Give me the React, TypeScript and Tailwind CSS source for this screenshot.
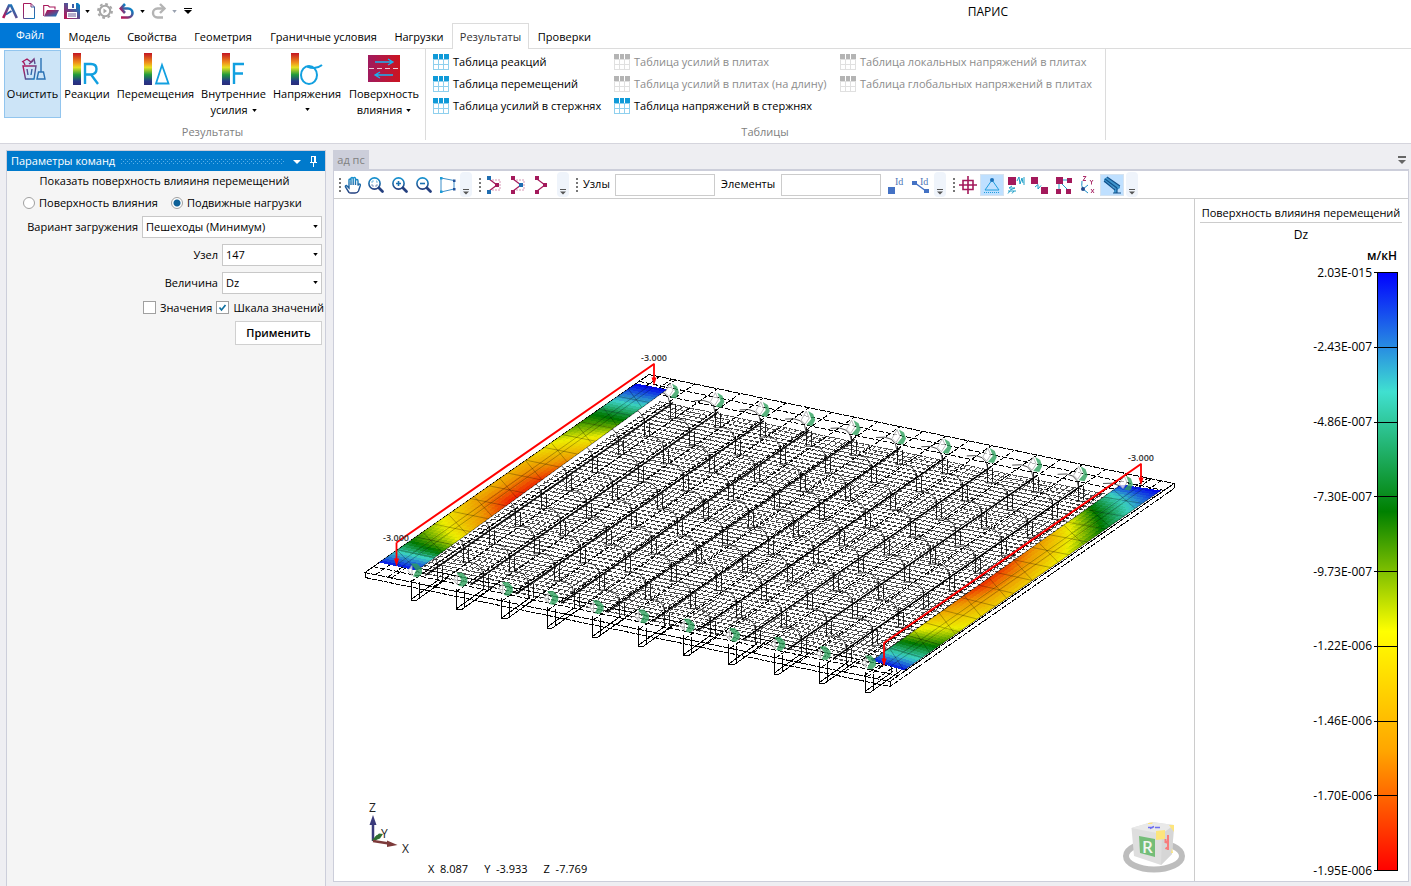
import React from "react";

type Pt = [number, number];

const FONT = "font-['Open_Sans','Noto_Sans',sans-serif]";

/* ---------- colour scale ---------- */

const STOPS: [number, number, number][] = [
  [0, 0, 255],
  [64, 224, 208],
  [0, 128, 0],
  [255, 255, 0],
  [255, 165, 0],
  [255, 0, 0],
];

function scaleColor(value: number): string {
  const x = Math.min(0.9999, Math.max(0, value)) * 5;
  const i = Math.floor(x);
  const f = x - i;
  const mix = STOPS[i].map((c, k) => Math.round((c + (STOPS[i + 1][k] - c) * f) * 0.93));
  return `rgb(${mix.join(",")})`;
}

function sample(table: Pt[], s: number): number {
  for (let i = 1; i < table.length; i++) {
    if (s <= table[i][0]) {
      const [s0, v0] = table[i - 1];
      const [s1, v1] = table[i];
      return v0 + ((v1 - v0) * (s - s0)) / (s1 - s0);
    }
  }
  return table[table.length - 1][1];
}

/* ---------- bridge deck model ---------- */

const slab = (a: number, b: number): Pt => [366 + a * 525 + b * 284, 573 + a * 109 - b * 198];
const seg = (p: Pt, q: Pt) => `M${p[0].toFixed(1)} ${p[1].toFixed(1)}L${q[0].toFixed(1)} ${q[1].toFixed(1)}`;
const GIRDERS = Array.from({ length: 11 }, (_, i) => i);

function deckLines() {
  let across = "";
  for (let b = 0.045; b < 0.915; b += 0.0156) across += seg(slab(0.072, b), slab(0.935, b));
  let along = "";
  for (let a = 0.075; a < 0.935; a += 0.01079) along += seg(slab(a, 0.04), slab(a, 0.9));
  let coarse = "";
  for (let i = 0; i <= 23; i++) coarse += seg(slab(i / 23, 0), slab(i / 23, 1));
  for (const b of [0.03, 0.06, 0.93, 0.965]) coarse += seg(slab(0, b), slab(1, b));
  for (const a of [0.02, 0.05, 0.95, 0.975]) coarse += seg(slab(a, 0), slab(a, 1));
  return { across, along, coarse };
}

function girderLines() {
  let thick = "";
  let front = "";
  let posts = "";
  let arcs = "";
  for (const i of GIRDERS) {
    const x = 416 + 45.4 * i;
    const y = 571 + 9.2 * i;
    thick += `M${x + 10} ${y + 5}L${x + 258} ${y - 168}`;
    front += `M${x - 4} ${y + 9}V${y + 30}H${x + 1}L${x + 4} ${y + 28}V${y + 11}M${x + 1} ${y + 30}L${x + 32} ${y + 8}M${x - 4} ${y + 29}L${x + 24} ${y + 9}`;
    for (let j = 1; j <= 10; j++) {
      const px = x + 25.8 * j;
      const py = y - 18 * j;
      posts += `M${px - 3} ${py + 9}V${py + 28}M${px + 2} ${py + 13}V${py + 27}`;
      arcs += `M${px - 24} ${py + 1}Q${px - 4} ${py - 2} ${px - 3} ${py + 14}`;
    }
  }
  return { thick, front, posts, arcs };
}

type Strip = { corners: [Pt, Pt, Pt, Pt]; near: Pt[]; far: Pt[] };

const STRIPS: Strip[] = [
  {
    corners: [[380, 563], [418, 571], [637, 384], [668, 390]],
    near: [[0, 0.02], [0.06, 0.2], [0.12, 0.4], [0.23, 0.58], [0.35, 0.74], [0.55, 0.74], [0.67, 0.6], [0.84, 0.38], [0.91, 0.18], [1, 0]],
    far: [[0, 0.02], [0.06, 0.2], [0.09, 0.38], [0.16, 0.58], [0.25, 0.78], [0.38, 0.97], [0.5, 0.94], [0.6, 0.83], [0.73, 0.62], [0.82, 0.42], [0.91, 0.2], [1, 0]],
  },
  {
    corners: [[873, 661], [905, 671], [1122, 485], [1162, 491]],
    near: [[0, 0.02], [0.05, 0.2], [0.11, 0.4], [0.18, 0.6], [0.28, 0.78], [0.42, 0.95], [0.53, 0.92], [0.7, 0.77], [0.79, 0.6], [0.88, 0.4], [0.95, 0.2], [1, 0.02]],
    far: [[0, 0.02], [0.06, 0.2], [0.13, 0.4], [0.24, 0.6], [0.35, 0.68], [0.5, 0.68], [0.64, 0.58], [0.77, 0.4], [0.88, 0.2], [1, 0]],
  },
];

function ResultStrip({ corners, near, far }: Strip) {
  const at = (s: number, t: number): Pt => {
    const mix = (p: Pt, q: Pt, f: number): Pt => [p[0] + (q[0] - p[0]) * f, p[1] + (q[1] - p[1]) * f];
    return mix(mix(corners[0], corners[2], s), mix(corners[1], corners[3], s), t);
  };
  const ns = 90;
  const nt = 8;
  const cells: React.ReactElement[] = [];
  for (let i = 0; i < ns; i++) {
    for (let j = 0; j < nt; j++) {
      const s = (i + 0.5) / ns;
      const t = (j + 0.5) / nt;
      const v = sample(near, s) * (1 - t) + sample(far, s) * t;
      const s1 = Math.min(1, (i + 1.4) / ns);
      const t1 = Math.min(1, (j + 1.2) / nt);
      const pts = [at(i / ns, j / nt), at(s1, j / nt), at(s1, t1), at(i / ns, t1)];
      cells.push(<polygon key={`${i}-${j}`} points={pts.map((p) => p.map((n) => n.toFixed(1)).join(",")).join(" ")} fill={scaleColor(v)} />);
    }
  }
  let grid = "";
  for (let i = 1; i < 14; i++) grid += seg(at(i / 14, 0), at(i / 14, 1));
  for (let i = 0; i < 10; i++) grid += seg(at((i + 0.7) / 10, 0), at(i / 10, 1));
  for (const t of [0.42, 0.58]) grid += seg(at(0, t), at(1, t));
  return (
    <g>
      <g shapeRendering="crispEdges">{cells}</g>
      <path d={grid} stroke="#000" strokeOpacity="0.35" strokeWidth="0.8" fill="none" />
      <path d={seg(at(0, 1), at(1, 1)) + seg(at(0, 0), at(1, 0))} stroke="#000" strokeOpacity="0.6" strokeWidth="0.8" />
    </g>
  );
}

function LoadArrow({ x, y, bottom }: { x: number; y: number; bottom: number }) {
  return (
    <g>
      <path d={`M${x} ${y}V${bottom - 5}`} stroke="#f00" strokeWidth="1.8" />
      <path d={`M${x - 2.5} ${bottom - 8}H${x + 2.5}L${x} ${bottom}Z`} fill="#f00" />
    </g>
  );
}

function DeckModel() {
  const { across, along, coarse } = deckLines();
  const { thick, front, posts, arcs } = girderLines();
  const [A, B, C, D] = [slab(0, 0), slab(0, 1), slab(1, 1), slab(1, 0)];
  return (
    <svg viewBox="335 200 860 681" className="h-full w-full" role="img" aria-label="Модель">
      <g fill="none" stroke="#000" shapeRendering="crispEdges">
        <path d={across} strokeDasharray="5 1" strokeOpacity="0.7" />
        <path d={along} strokeDasharray="3 2" strokeOpacity="0.7" />
        <path d={coarse} strokeDasharray="5 2" />
        <path d={`M${A}L${B}L${C}L${D}Z`} strokeDasharray="7 1" />
        <path d={`M${A}v5L${D[0]} ${D[1] + 5}L${C[0]} ${C[1] + 5}v-5M${D}v5`} strokeDasharray="5 1" />
        <path d={front} />
        <path d={posts} strokeOpacity="0.85" />
      </g>
      <path d={thick} stroke="#000" strokeWidth="1.4" />
      <path d={arcs} stroke="#222" strokeWidth="0.8" fill="none" />
      {STRIPS.map((s, i) => (
        <ResultStrip key={i} {...s} />
      ))}
      {GIRDERS.map((i) => {
        const x = 416 + 45.4 * i;
        const y = 571 + 9.2 * i;
        return (
          <g key={i}>
            <path d={`M${x - 7} ${y}l4 -5v10zM${x + 250} ${y - 178}l5 -9 3 7 -4 6z`} fill="#fff" fillOpacity="0.7" stroke="#aaa" strokeWidth="0.8" />
            <path d={`M${x - 4} ${y - 7}h6l5 5v5l-4 4 -5 -1 3 -6z`} fill="#2ea05c" fillOpacity="0.8" />
            <path d={`M${x + 257} ${y - 187}l5 3 2 6 -3 6 -6 -1 5 -6z`} fill="#2ea05c" fillOpacity="0.8" />
          </g>
        );
      })}
      <path d="M397.500 543L655 364.500M885 643.500L1142 464.500" stroke="#f00" strokeWidth="2" fill="none" />
      <LoadArrow x={397.5} y={543} bottom={567} />
      <LoadArrow x={655} y={364} bottom={386} />
      <LoadArrow x={885} y={643} bottom={667} />
      <LoadArrow x={1142} y={464} bottom={486} />
      <g className="font-['Open_Sans','Noto_Sans',sans-serif] text-[9px] font-semibold" fill="#333" textAnchor="middle">
        <text x="655" y="361">-3.000</text>
        <text x="397" y="541">-3.000</text>
        <text x="1142" y="461">-3.000</text>
      </g>
    </svg>
  );
}

/* ---------- small drawings ---------- */

const Defs = () => (
  <svg className="absolute h-0 w-0" aria-hidden="true">
    <defs>
      <linearGradient id="pb" x1="0" y1="0" x2="1" y2="1">
        <stop offset="0.2" stopColor="#a8195c" />
        <stop offset="0.9" stopColor="#1a76b8" />
      </linearGradient>
      <linearGradient id="bp" x1="0" y1="1" x2="1" y2="0">
        <stop offset="0.1" stopColor="#b0195a" />
        <stop offset="0.9" stopColor="#0a7fc4" />
      </linearGradient>
      <linearGradient id="blue" x1="0" y1="0" x2="0" y2="1">
        <stop offset="0" stopColor="#1692d0" />
        <stop offset="1" stopColor="#25407f" />
      </linearGradient>
      <linearGradient id="rain" x1="0" y1="0" x2="0" y2="1">
        <stop offset="0" stopColor="#c31423" />
        <stop offset="0.3" stopColor="#f0901a" />
        <stop offset="0.45" stopColor="#e8e020" />
        <stop offset="0.68" stopColor="#1f9a3c" />
        <stop offset="0.88" stopColor="#25378a" />
        <stop offset="1" stopColor="#2b2d78" />
      </linearGradient>
      <linearGradient id="road" x1="0" y1="0" x2="1" y2="0">
        <stop offset="0" stopColor="#a01a5e" />
        <stop offset="1" stopColor="#cc1420" />
      </linearGradient>
    </defs>
  </svg>
);

const Caret = ({ className = "" }: { className?: string }) => (
  <svg viewBox="0 0 6 4" className={`h-[3px] w-[5px] shrink-0 ${className}`} aria-hidden="true">
    <path d="M0 0H6L3 4Z" fill="currentColor" />
  </svg>
);

const Overflow = ({ className = "" }: { className?: string }) => (
  <button type="button" aria-label="Ещё" className={`flex h-[25px] w-3 shrink-0 items-end justify-center rounded-sm bg-[#eff4fb] pb-[2px] ${className}`}>
    <svg viewBox="0 0 6 6" className="h-[6px] w-[6px]">
      <path d="M0 .5H6" stroke="#555" />
      <path d="M0 2.500H6L3 5.500Z" fill="#555" />
    </svg>
  </button>
);

const Grip = ({ className = "" }: { className?: string }) => (
  <svg viewBox="0 0 4 16" className={`h-4 w-1 shrink-0 ${className}`} aria-hidden="true" shapeRendering="crispEdges">
    {[0, 4, 8, 12].map((y) => (
      <rect key={y} x="1" y={y + 1} width="2" height="2" fill="#777" />
    ))}
  </svg>
);

function Tool({ label, active, className = "w-6", children }: { label: string; active?: boolean; className?: string; children: React.ReactNode }) {
  return (
    <button
      type="button"
      aria-label={label}
      className={`flex h-[22px] shrink-0 items-center justify-center ${active ? "border border-[#d5e3f0] bg-[#bfe0ff]" : ""} ${className}`}
    >
      <svg viewBox="0 0 18 18" className="h-[18px] w-[18px] shrink-0 overflow-visible" fill="none">
        {children}
      </svg>
    </button>
  );
}

const Magnifier = ({ children }: { children?: React.ReactNode }) => (
  <g stroke="url(#blue)">
    <circle cx="7.500" cy="7.500" r="5.600" strokeWidth="1.600" />
    <path d="M12 12L15.500 15.500" stroke="#25407f" strokeWidth="2.800" strokeLinecap="round" />
    {children}
  </g>
);

const TableIcon = ({ muted }: { muted?: boolean }) => {
  const head = muted ? "#b4b4b4" : "#0f9ad8";
  const line = muted ? "#e0e0e0" : "#8fd0ee";
  return (
    <svg viewBox="0 0 16 16" className="h-4 w-4 shrink-0" shapeRendering="crispEdges" aria-hidden="true">
      <rect x="0" y="5" width="16" height="11" fill={line} />
      {[1, 6, 11].map((x) => (
        <g key={x} fill="#fff">
          <rect x={x} y="6" width="4" height="4" />
          <rect x={x} y="11" width="4" height="4" />
        </g>
      ))}
      {[0, 6, 11].map((x) => (
        <rect key={x} x={x} y="0" width={x === 6 ? 4 : 5} height="5" fill={head} />
      ))}
    </svg>
  );
};

const RainbowBar = () => <rect x="0" y="0" width="8" height="32" fill="url(#rain)" />;

/* ---------- title bar ---------- */

function TitleBar() {
  return (
    <header className="flex h-6 items-center">
      <div className="flex flex-1 items-center pb-[2px] pl-[2px]">
        <svg viewBox="0 0 16 16" className="h-4 w-4" aria-hidden="true">
          <path d="M1.200 15L7 2.500H9L14.800 15" fill="none" stroke="url(#bp)" strokeWidth="2.600" />
          <path d="M4 11.500L9.500 8" stroke="#2a5ca8" strokeWidth="1.800" />
        </svg>
        <button type="button" aria-label="Создать" className="ml-[5px]">
          <svg viewBox="0 0 12 16" className="h-4 w-3" fill="none" stroke="url(#pb)">
            <path d="M.5 .5H8L11.500 4V15.500H.5Z" />
            <path d="M8 .5V4H11.500" />
          </svg>
        </button>
        <button type="button" aria-label="Открыть" className="ml-2">
          <svg viewBox="0 0 16 14" className="h-[14px] w-4">
            <path d="M.7 12V1.500H5L6.500 3H12V5.500" fill="none" stroke="#a8195c" strokeWidth="1.100" />
            <path d="M1 12.500L4 6H16L13 12.500Z" fill="url(#pb)" />
          </svg>
        </button>
        <button type="button" aria-label="Сохранить" className="ml-[5px]">
          <svg viewBox="0 0 16 16" className="h-4 w-4">
            <path d="M0 0H14L16 2V16H0Z" fill="url(#bp)" />
            <path d="M4 0H12V6H4ZM3 9H13V15H3Z" fill="#fff" />
            <path d="M4 11H12M4 13H12" stroke="#6a5a9a" fill="none" />
            <path d="M8 1H10V5H8Z" fill="#3a5ca8" />
          </svg>
        </button>
        <Caret className="ml-[5px]" />
        <button type="button" aria-label="Настройки" className="ml-[7px]">
          <svg viewBox="0 0 16 16" className="h-4 w-4" fill="none" stroke="#a6a6a6">
            <circle cx="8" cy="8" r="5.200" strokeWidth="2" />
            <circle cx="8" cy="8" r="7" strokeWidth="1.800" strokeDasharray="2.750 2.750" />
            <path d="M6.500 5.500L10 8L6.500 10.500Z" fill="#a6a6a6" stroke="none" />
          </svg>
        </button>
        <button type="button" aria-label="Отменить" className="ml-[6px]">
          <svg viewBox="0 0 16 16" className="h-4 w-4" fill="none" stroke="url(#bp)" strokeWidth="2.600">
            <path d="M2 5.500H9A4.500 4.500 0 0 1 9 14.500H2" />
            <path d="M6 1L1.800 5.500L6 10" />
          </svg>
        </button>
        <Caret className="ml-[5px]" />
        <button type="button" aria-label="Повторить" className="ml-[6px]">
          <svg viewBox="0 0 16 16" className="h-4 w-4" fill="none" stroke="#b4b4b4" strokeWidth="2.400">
            <path d="M13 5.500H6.500A4.500 4.500 0 0 0 6.500 14.500H12" />
            <path d="M9 1L13.500 5.500L9 10" />
          </svg>
        </button>
        <Caret className="ml-[5px] text-gray-400" />
        <svg viewBox="0 0 8 6" className="ml-[7px] h-[6px] w-2" aria-hidden="true">
          <path d="M0 .5H8" stroke="#000" />
          <path d="M0 2H8L4 6Z" />
        </svg>
      </div>
      <h1 className="text-xs">ПАРИС</h1>
      <div className="w-[403px]" />
    </header>
  );
}

/* ---------- ribbon ---------- */

const TABS: [string, string][] = [
  ["Модель", "w-[59px]"],
  ["Свойства", "w-[66px]"],
  ["Геометрия", "w-[76px]"],
  ["Граничные условия", "w-[125px]"],
  ["Нагрузки", "w-[66px]"],
  ["Результаты", "w-[77px]"],
  ["Проверки", "w-[71px]"],
];

function Tabs() {
  return (
    <nav className="flex h-[25px] border-b border-[#dcdcdc] whitespace-nowrap">
      <button type="button" className="-mt-px h-[25px] w-[60px] bg-[#0078d7] text-white">Файл</button>
      {TABS.map(([name, w]) =>
        name === "Результаты" ? (
          <button key={name} type="button" aria-current="page" className={`-mt-px flex h-[26px] items-center justify-center border border-b-0 border-[#dcdcdc] bg-white pt-px text-[#333] ${w}`}>
            {name}
          </button>
        ) : (
          <button key={name} type="button" className={`flex items-center justify-center pt-[2px] ${w}`}>
            {name}
          </button>
        ),
      )}
    </nav>
  );
}

function BigButton({ lines, w, active, caret, children }: { lines: string[]; w: string; active?: boolean; caret?: boolean; children: React.ReactNode }) {
  return (
    <button
      type="button"
      className={`flex h-[68px] flex-col items-center border pt-[2px] leading-4 whitespace-nowrap ${w} ${active ? "border-[#92c5ee] bg-[#cce4f7]" : "border-transparent"}`}
    >
      <svg viewBox="0 0 32 32" className="mb-[1px] h-8 w-8 shrink-0" fill="none">
        {children}
      </svg>
      <span>{lines[0]}</span>
      {caret && (
        <span className="flex h-4 items-center gap-1">
          {lines[1]}
          <Caret />
        </span>
      )}
    </button>
  );
}

const TABLES: [string, boolean][] = [
  ["Таблица реакций", false],
  ["Таблица перемещений", false],
  ["Таблица усилий в стержнях", false],
  ["Таблица усилий в плитах", true],
  ["Таблица усилий в плитах (на длину)", true],
  ["Таблица напряжений в стержнях", false],
  ["Таблица локальных напряжений в плитах", true],
  ["Таблица глобальных напряжений в плитах", true],
];

function Ribbon() {
  return (
    <div className="flex h-[95px] border-b border-[#d5d5dd] pb-[3px] pl-1">
      <section className="flex w-[422px] flex-col justify-between border-r border-[#dcdcdc] pt-[1px]">
        <div className="flex">
          <BigButton lines={["Очистить"]} w="w-[57px]" active>
            <g stroke="url(#pb)" strokeWidth="1.400">
              <path d="M6 13H19L17 26H8.500Z" />
              <path d="M5 9L10 6L14 9L17 6L18 11M8 12L6 8M12 11L16 8M10 16L11 22M15 16L14 22" />
              <path d="M24 5V19M20 26L21.500 19H26.500L28 26Z" stroke="#2b72b4" />
            </g>
          </BigButton>
          <BigButton lines={["Реакции"]} w="w-[52px]">
            <g transform="translate(2 0)">
              <RainbowBar />
              <path d="M12 31V11H18Q23.500 11 23.500 16T18 21.500H12M18 21.500L25 31" stroke="#12a0e0" strokeWidth="2.400" />
            </g>
          </BigButton>
          <BigButton lines={["Перемещения"]} w="w-[85px]">
            <g transform="translate(4 0)">
              <RainbowBar />
              <path d="M18 12L12 30.500H24.500Z" stroke="#12a0e0" strokeWidth="1.800" />
            </g>
          </BigButton>
          <BigButton lines={["Внутренние", "усилия"]} w="w-[71px]" caret>
            <g transform="translate(4 0)">
              <RainbowBar />
              <path d="M12 31V11H22M12 20.500H21" stroke="#12a0e0" strokeWidth="2.400" />
            </g>
          </BigButton>
          <BigButton lines={["Напряжения", ""]} w="w-[76px]" caret>
            <RainbowBar />
            <ellipse cx="18" cy="22" rx="8" ry="9" stroke="#12a0e0" strokeWidth="2" />
            <path d="M16 13.500Q25 17 31 12" stroke="#12a0e0" strokeWidth="2" />
          </BigButton>
          <BigButton lines={["Поверхность", "влияния"]} w="w-[78px]" caret>
            <rect x="0" y="2" width="32" height="27" fill="url(#road)" />
            <path d="M1 15.500H31" stroke="#f0c8d8" strokeDasharray="5 3" />
            <path d="M7 9H24M20 6L25 9L20 12M25 22H8M12 19L7 22L12 25" stroke="#19b2f2" strokeWidth="1.300" />
          </BigButton>
        </div>
        <h2 className="pr-1 text-center leading-4 text-[#808080]">Результаты</h2>
      </section>
      <section className="flex w-[680px] flex-col justify-between border-r border-[#dcdcdc] pt-[2px] pl-[7px]">
        <div className="grid grid-flow-col grid-cols-[181px_226px_auto] grid-rows-[22px_22px_22px] whitespace-nowrap">
          {TABLES.map(([name, muted]) => (
            <button key={name} type="button" disabled={muted} className={`flex items-center gap-1 ${muted ? "text-[#8c8c8c]" : ""}`}>
              <TableIcon muted={muted} />
              {name}
            </button>
          ))}
        </div>
        <h2 className="pr-2 text-center leading-4 text-[#808080]">Таблицы</h2>
      </section>
    </div>
  );
}

/* ---------- command panel ---------- */

function Combo({ id, label, value, w }: { id: string; label: string; value: string; w: string }) {
  return (
    <div className="flex items-center justify-end gap-1">
      <label htmlFor={id}>{label}</label>
      <div className={`relative ${w}`}>
        <select id={id} defaultValue={value} className="block h-[22px] w-full appearance-none border border-[#c8c8c8] bg-white pl-[3px]">
          <option>{value}</option>
        </select>
        <Caret className="pointer-events-none absolute top-[9px] right-1" />
      </div>
    </div>
  );
}

function CommandPanel() {
  return (
    <aside className="flex w-[320px] shrink-0 flex-col border border-b-0 border-[#ccceda] bg-[#f5f5f5]">
      <div className="flex h-5 items-center bg-[#007acc] pt-px pr-2 pl-1 text-white">
        <h2>Параметры команд</h2>
        <svg className="ml-[6px] h-[5px] flex-1" aria-hidden="true">
          <defs>
            <pattern id="dots" width="4" height="4" patternUnits="userSpaceOnUse">
              <path d="M0 .5H1M2 2.500H3" stroke="#5cb0e8" />
            </pattern>
          </defs>
          <rect width="100%" height="5" fill="url(#dots)" />
        </svg>
        <button type="button" aria-label="Меню панели" className="ml-2">
          <svg viewBox="0 0 8 4" className="h-1 w-2"><path d="M0 0H8L4 4Z" fill="#fff" /></svg>
        </button>
        <button type="button" aria-label="Закрепить" className="ml-[9px]">
          <svg viewBox="0 0 7 11" className="h-[11px] w-[7px]" fill="none" stroke="#fff" shapeRendering="crispEdges">
            <path d="M1.500 6V.5H5.500V6M4.500 .5V6M0 6.500H7M3.500 7V11" />
          </svg>
        </button>
      </div>
      <form className="pr-[3px] leading-4" onSubmit={(e) => e.preventDefault()}>
        <p className="mt-[1px] text-center leading-[18px]">Показать поверхность влияиня перемещений</p>
        <div className="flex h-[26px] items-center pl-4 whitespace-nowrap">
          <label className="flex w-[148px] items-center gap-1">
            <input type="radio" name="mode" className="h-3 w-3 appearance-none rounded-full border border-[#a0a0a0] bg-white" />
            Поверхность влияния
          </label>
          <label className="flex items-center gap-1">
            <input type="radio" name="mode" defaultChecked className="h-3 w-3 appearance-none rounded-full border border-[#a0a0a0] bg-white bg-[radial-gradient(circle,#0e6198_0_3px,transparent_4px)]" />
            Подвижные нагрузки
          </label>
        </div>
        <div className="flex flex-col gap-[6px]">
          <Combo id="variant" label="Вариант загружения" value="Пешеходы (Минимум)" w="w-[180px]" />
          <Combo id="node" label="Узел" value="147" w="w-[100px]" />
          <Combo id="quantity" label="Величина" value="Dz" w="w-[100px]" />
        </div>
        <div className="-mr-[2px] flex h-[27px] items-center justify-end gap-1 whitespace-nowrap">
          <label className="flex items-center gap-1">
            <input type="checkbox" className="h-[13px] w-[13px] appearance-none border border-[#a0a0a0] bg-white" />
            Значения
          </label>
          <label className="flex items-center gap-1">
            <span className="relative h-[13px] w-[13px]">
              <input type="checkbox" defaultChecked className="block h-[13px] w-[13px] appearance-none border border-[#a0a0a0] bg-white" />
              <svg viewBox="0 0 13 13" className="pointer-events-none absolute inset-0" fill="none">
                <path d="M3.500 6.500L5.500 9L9.500 4" stroke="#0e6f9f" strokeWidth="1.700" />
              </svg>
            </span>
            Шкала значений
          </label>
        </div>
        <div className="flex justify-end">
          <button type="submit" className="h-6 w-[87px] border border-[#d0d0d0] bg-white font-semibold">Применить</button>
        </div>
      </form>
    </aside>
  );
}

/* ---------- view toolbar ---------- */

function ViewToolbar() {
  const M = "#a3195b";
  const Bl = "#1f6db0";
  return (
    <div className="flex h-7 items-center overflow-hidden border-b border-[#ccc] pl-1 whitespace-nowrap">
      <Grip />
      <Tool label="Панорама" className="w-[22px]">
        <path d="M5 16.500L1.500 11Q1 9.500 2.500 9.500L5 12V4Q5 3 6 3T7 4V9V2.500Q7 1.500 8 1.500T9.200 2.500V9V2.500Q9.200 1.500 10.400 1.500T11.500 3V9V4.500Q12 3.500 13 3.500T14 5V9.500Q14.500 8 15.500 8T16.300 9.500L14.500 15Q13.500 17 11 17H7Q5.500 17 5 16.500Z" stroke="url(#blue)" strokeWidth="1.400" />
      </Tool>
      <Tool label="Показать всё">
        <Magnifier><path d="M5 7V5H7M9 5H10V7M10 8V10H8M7 10H5V8" strokeWidth="0.800" strokeOpacity="0.7" /></Magnifier>
      </Tool>
      <Tool label="Увеличить"><Magnifier><path d="M5 7.500H10M7.500 5V10.100" stroke="#1a70b0" strokeWidth="1.600" /></Magnifier></Tool>
      <Tool label="Уменьшить"><Magnifier><path d="M5 7.500H10" stroke="#1a70b0" strokeWidth="1.600" /></Magnifier></Tool>
      <Tool label="Рамка">
        <path d="M2 2L15 4.500V13L2 16Z" stroke="#3c8ec8" />
        <path d="M1 1H3.500V3.500H1ZM1 14.500H3.500V17H1Z" fill="#199cd8" />
        <path d="M14 3.500H16.500V6H14ZM14 12H16.500V14.500H14Z" fill="#24529a" />
      </Tool>
      <Overflow />
      <Grip className="ml-[6px]" />
      {[0, 1, 2].map((k) => (
        <Tool key={k} label={`Выбор ${k + 1}`}>
          {k < 2 && <path d="M7 4H15V14H7" stroke={M} strokeOpacity="0.45" strokeDasharray="2 1" />}
          <path d="M4 3L12 9L4 15" stroke={M} strokeWidth="1.200" />
          <rect x="2" y="0" width="4" height="4" fill={k === 0 ? Bl : M} />
          <rect x="2" y="14" width="4" height="4" fill={k === 0 ? Bl : M} />
          <rect x="10" y="7" width="4" height="4" fill={k === 1 ? Bl : M} />
        </Tool>
      ))}
      <Overflow className="ml-[3px]" />
      <Grip className="ml-[6px]" />
      <label htmlFor="nodes" className="ml-1 w-8">Узлы</label>
      <input id="nodes" className="h-[22px] w-[100px] border border-[#ccc] bg-white px-1" />
      <label htmlFor="elements" className="ml-[6px] w-[60px]">Элементы</label>
      <input id="elements" className="h-[22px] w-[100px] border border-[#ccc] bg-white px-1" />
      <Tool label="Номера узлов" className="ml-[3px] w-6">
        <rect x="1" y="11" width="7" height="7" fill="#4472c4" />
        <text x="8" y="9" fontSize="10" fontFamily="Liberation Serif, serif" fill="#4f78b8">Id</text>
      </Tool>
      <Tool label="Номера элементов" className="w-[26px]">
        <path d="M3 7L14 15" stroke="#4472c4" strokeWidth="1.500" />
        <path d="M0 5H5V9H0ZM12 13H17V17H12Z" fill="#4472c4" />
        <text x="8" y="9" fontSize="10" fontFamily="Liberation Serif, serif" fill="#4f78b8">Id</text>
      </Tool>
      <Overflow />
      <Grip className="ml-[6px]" />
      <Tool label="Узлы на виде" className="w-6">
        <path d="M9 0V18M0 9H18M4 4.500H14V13.500H4Z" stroke={M} strokeWidth="1.600" />
      </Tool>
      <Tool label="Опоры" active>
        <path d="M9 4L2 14H16Z" stroke="#1f9ede" />
        <path d="M1 16.500H17" stroke="#1f9ede" strokeDasharray="1 1" />
        <circle cx="9" cy="4" r="2" fill="#1a6fb8" />
      </Tool>
      <Tool label="Связи">
        <rect x="1" y="1" width="8" height="8" fill={M} />
        <path d="M10 5L12 1L13 8L15 2L16 7M17 1V9M5 10L2 12H8L3 14M1 15H9M1 17.500L3 15M5 17.500L7 15" stroke="#1d9fc8" />
      </Tool>
      <Tool label="Шарниры">
        <rect x="0" y="1" width="7" height="7" fill={M} />
        <rect x="10" y="11" width="7" height="7" fill={M} />
        <path d="M4 11L7 8.500V13L10 9.500" stroke="#1d9fc8" />
      </Tool>
      <Tool label="Жёсткие вставки">
        <path d="M4 4H14M4 5V14M4 5L13 14" stroke="#1d9fc8" />
        <path d="M1 1H8V8H1ZM12 2H17V7H12ZM1 13H6V18H1ZM11 13H16V18H11Z" fill={M} />
      </Tool>
      <Tool label="Оси элементов">
        <path d="M3 5Q2 10 4 13L9 17M4 13L9 9" stroke="#1d8fc8" />
        <circle cx="4" cy="13" r="2" fill="#244a8c" />
        <path d="M4 0.500H7L4 4.500H7M11 4L12.500 6L14 4M12.500 6V8.500M12 13L15 17M15 13L12 17" stroke={M} strokeWidth="0.900" />
      </Tool>
      <Tool label="Сечения" active>
        <path d="M1 3L4 1L17 10V12L14 14V17H11V12L1 6Z" fill="#3f95cc" />
        <path d="M1 5L12 14M2 3L14 12M4 1L17 10M10 17H18M14 12V17" stroke="#12508a" strokeWidth="1.100" />
      </Tool>
      <Overflow className="ml-[2px]" />
    </div>
  );
}

/* ---------- view ---------- */

const AxisTriad = () => (
  <svg viewBox="0 0 50 60" className="absolute bottom-[25px] left-8 h-[60px] w-[50px]" aria-hidden="true">
    <path d="M7 45V28" stroke="#3a3a7c" strokeWidth="2.500" />
    <path d="M7 19L10.500 29H3.500Z" fill="#3a3a7c" />
    <path d="M7 45L12 40" stroke="#2f7034" strokeWidth="3" />
    <path d="M9 41L13 37.500L17 38L14 42.500L10 44Z" fill="#2f7034" />
    <path d="M7 45L23 47.500" stroke="#7c3a3a" strokeWidth="2.500" />
    <path d="M21 44.500L31.500 49L21 51Z" fill="#7c3a3a" />
    <g className="font-['Open_Sans',sans-serif] text-[12px]" fill="#222">
      <text x="3" y="16">Z</text>
      <text x="15" y="42">Y</text>
      <text x="36" y="57">X</text>
    </g>
  </svg>
);

const ViewCube = () => (
  <svg viewBox="0 0 64 54" className="absolute right-2 bottom-[7px] h-[54px] w-[64px]" aria-hidden="true">
    <ellipse cx="32" cy="36" rx="28" ry="13.500" fill="none" stroke="#bdbdbd" strokeWidth="6" />
    <path d="M9.500 8L30 2L52 5L50 34L39 45L12 36Z" fill="#dedede" />
    <path d="M9.500 8L30 2L52 5L40 14Z" fill="#e9e9e9" />
    <path d="M40 14L52 5L50 34L39 45Z" fill="#d6d6d6" />
    <path d="M26 3L31 2.500L30 4H26ZM34 11L43 10V19L34 20ZM47 5H52V12L49 8ZM50 28L51 33L49 33Z" fill="#fde57c" />
    <path d="M26 7.500H31M33 7.500H38M28 8.500L32 6.500" stroke="#6f6ff0" strokeWidth="1.500" />
    <path d="M17 16L33 19V37L18 33Z" fill="#74bd78" />
    <text x="20" y="33" fontSize="17" fontFamily="Open Sans, sans-serif" fontWeight="600" fill="#f0f4f0">R</text>
    <path d="M46 15V30M43.500 19V23M43.500 29L46 27M43.500 23L46 21" stroke="#f87c7c" strokeWidth="2" />
  </svg>
);

const LEGEND = ["2.03E-015", "-2.43E-007", "-4.86E-007", "-7.30E-007", "-9.73E-007", "-1.22E-006", "-1.46E-006", "-1.70E-006", "-1.95E-006"];

function Legend() {
  return (
    <aside className="flex w-[214px] shrink-0 flex-col border-l border-[#ccc] pt-[5px] pr-[6px] pb-[10px] pl-[5px] leading-4 whitespace-nowrap">
      <h2 className="flex h-[19px] items-center justify-center border-b border-[#ccc]">Поверхность влияиня перемещений</h2>
      <p className="mt-1 text-center text-xs leading-4">Dz</p>
      <p className="mt-[5px] pr-[5px] text-right text-xs leading-4 font-semibold">м/кН</p>
      <div className="relative mt-2 mr-1 flex-1 text-xs">
        <div className="absolute inset-y-0 right-0 w-[21px] border-x border-black bg-[linear-gradient(#0000ff,#40e0d0_20%,#008000_40%,#ffff00_60%,#ffa500_80%,#ff0000)]" />
        <ul className="relative flex h-full flex-col justify-between">
          {LEGEND.map((v) => (
            <li key={v} className="flex h-px items-center justify-end gap-[2px]">
              {v}
              <span className="h-px w-6 bg-black" />
            </li>
          ))}
        </ul>
      </div>
    </aside>
  );
}

function Workspace() {
  return (
    <main className="mr-[2px] mb-1 flex min-w-0 flex-1 flex-col">
      <div className="flex h-[19px] items-center justify-between pr-[3px]">
        <button type="button" className="h-[19px] w-9 bg-[#ccceda] pt-px text-[#808080]">ад пс</button>
        <button type="button" aria-label="Список окон">
          <svg viewBox="0 0 8 8" className="h-2 w-2"><path d="M0 0H8V2H0ZM0 4H8L4 8Z" fill="#666" /></svg>
        </button>
      </div>
      <div className="flex min-h-0 flex-1 flex-col border border-t-2 border-[#ccceda] bg-white">
        <ViewToolbar />
        <div className="flex min-h-0 flex-1">
          <div className="relative min-w-0 flex-1">
            <DeckModel />
            <AxisTriad />
            <p className="absolute bottom-1 left-[94px] flex gap-4 leading-4">
              <span>X&nbsp; 8.087</span>
              <span>Y&nbsp; -3.933</span>
              <span>Z&nbsp; -7.769</span>
            </p>
            <ViewCube />
          </div>
          <Legend />
        </div>
      </div>
    </main>
  );
}

export default function App() {
  return (
    <div className={`flex h-screen flex-col overflow-hidden bg-[#eeeef2] text-[11px] text-black ${FONT}`}>
      <Defs />
      <div className="bg-white">
        <TitleBar />
        <Tabs />
        <Ribbon />
      </div>
      <div className="flex min-h-0 flex-1 gap-[7px] pt-[6px] pl-[6px]">
        <CommandPanel />
        <Workspace />
      </div>
    </div>
  );
}
